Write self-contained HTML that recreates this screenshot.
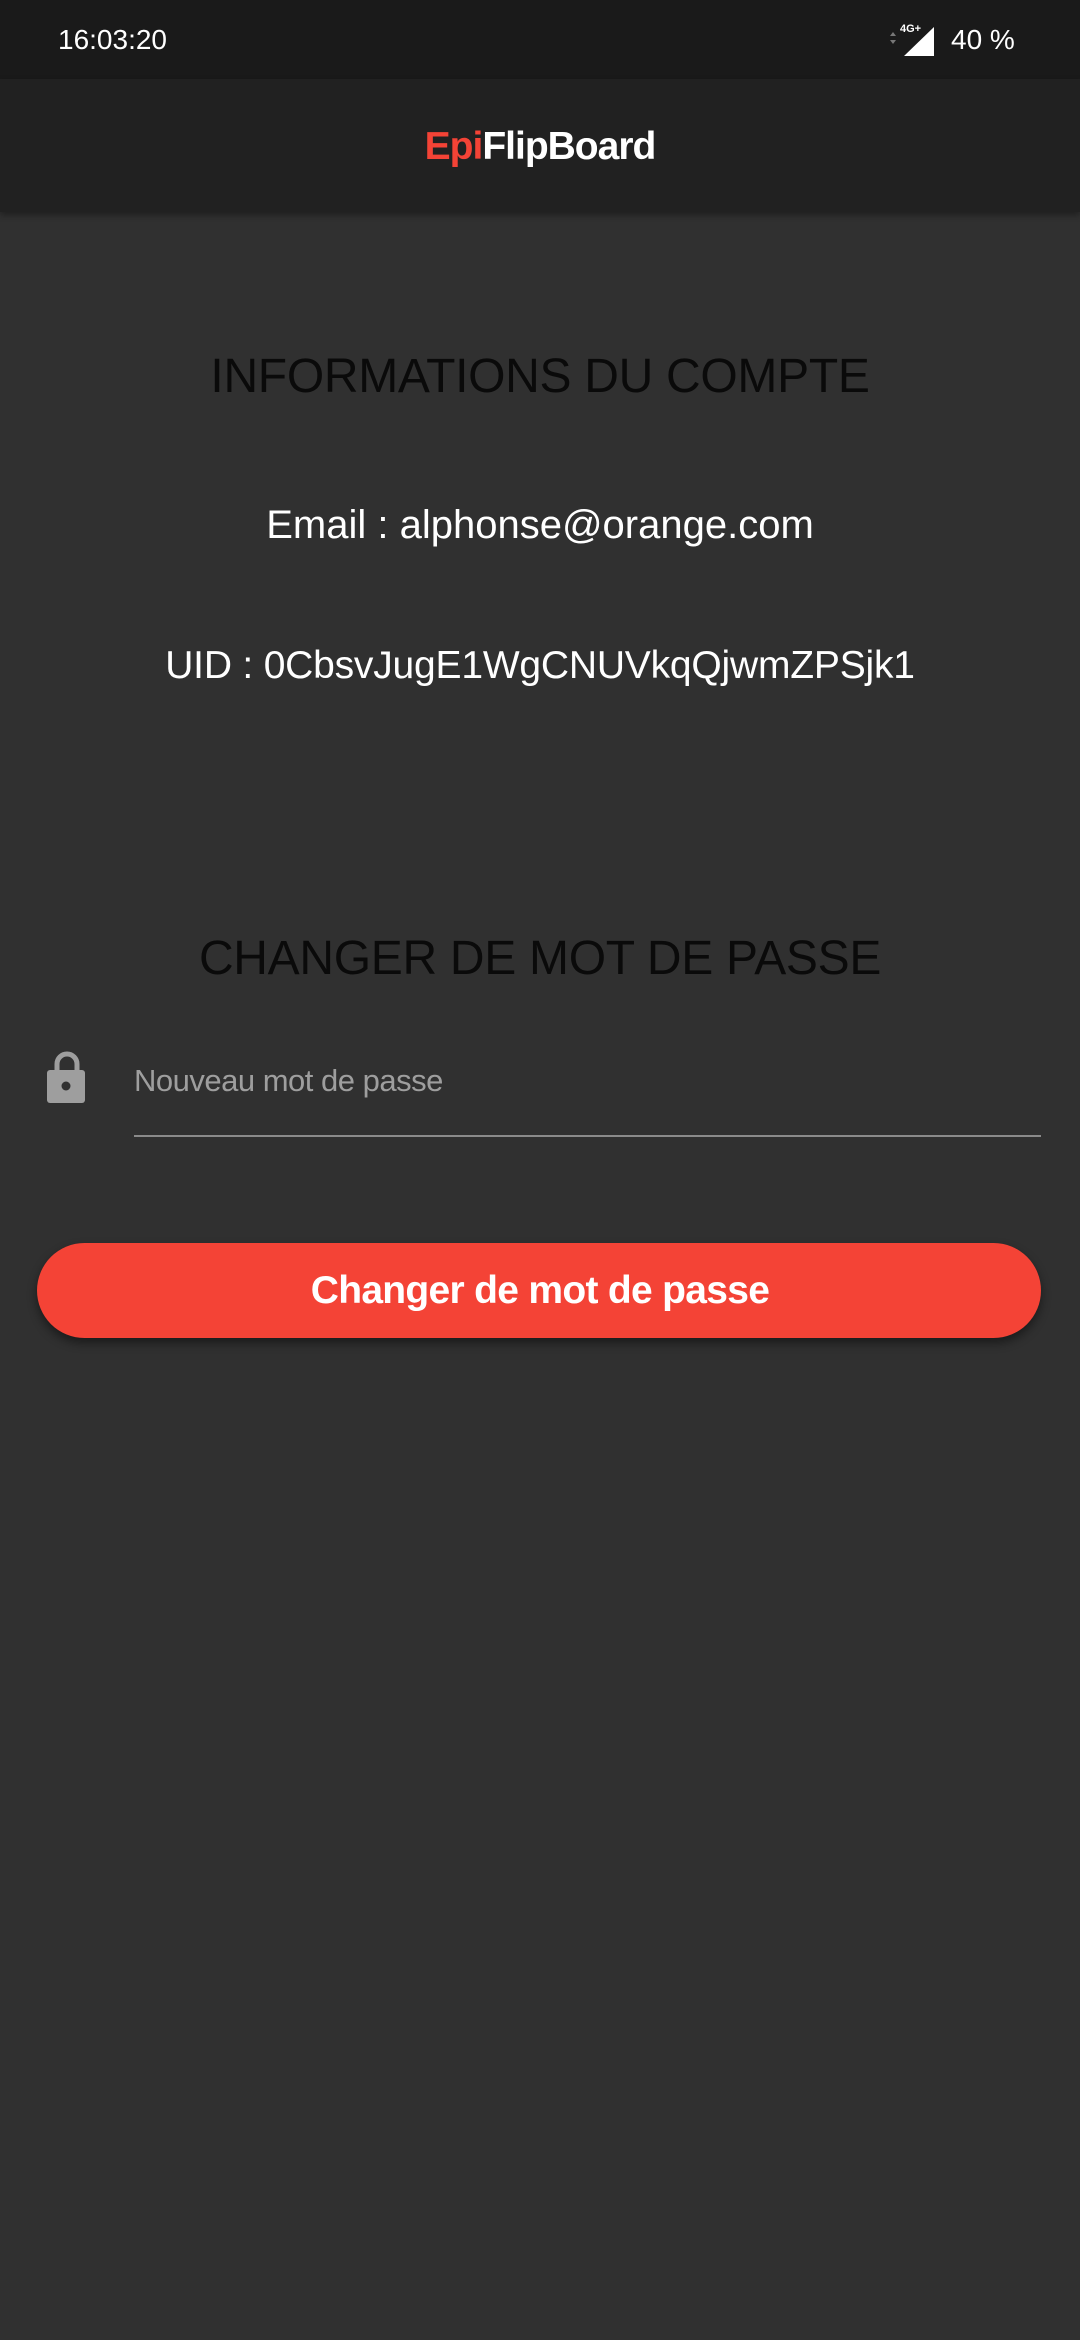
<!DOCTYPE html>
<html><head><meta charset="utf-8"><style>
html,body{margin:0;padding:0;}
body{width:1080px;height:2340px;background:#303030;font-family:"Liberation Sans",sans-serif;position:relative;overflow:hidden;}
.sb{position:absolute;left:0;top:0;width:1080px;height:79px;background:#1a1a1a;}
.ab{position:absolute;left:0;top:79px;width:1080px;height:133px;background:#212121;box-shadow:0 3px 6px rgba(0,0,0,0.35);}
.t{position:absolute;left:0;width:1080px;text-align:center;white-space:nowrap;}
</style></head><body>
<div class="sb">
<div style="position:absolute;left:58px;top:24px;color:#fff;font-size:28px;">16:03:20</div>
<svg style="position:absolute;left:884px;top:22px" width="52" height="36" viewBox="0 0 52 36">
<path d="M6 14 L9 10 L12 14Z M6 18 L9 22 L12 18Z" fill="#777"/>
<path d="M50 5 L50 34 L20 34Z" fill="#fff"/>
<text x="16" y="10" fill="#fff" font-size="11" font-weight="bold" font-family="Liberation Sans">4G+</text>
</svg>
<div style="position:absolute;left:951px;top:24px;color:#fff;font-size:28px;">40 %</div>
</div>
<div class="ab">
<div class="t" style="top:46px;font-size:39px;font-weight:bold;letter-spacing:-1px;"><span style="color:#f44336">Epi</span><span style="color:#fff">FlipBoard</span></div>
</div>
<div class="t" style="top:349px;font-size:48px;color:#0a0a0a;letter-spacing:-0.3px;">INFORMATIONS DU COMPTE</div>
<div class="t" style="top:503px;font-size:40px;color:#fff;">Email : alphonse@orange.com</div>
<div class="t" style="top:644px;font-size:39px;color:#fff;letter-spacing:-0.2px;">UID : 0CbsvJugE1WgCNUVkqQjwmZPSjk1</div>
<div class="t" style="top:931px;font-size:48px;color:#0a0a0a;letter-spacing:-0.3px;">CHANGER DE MOT DE PASSE</div>
<svg style="position:absolute;left:44px;top:1050px" width="46" height="58" viewBox="0 0 46 58">
<path d="M13 22 V14 A10 10 0 0 1 33 14 V22" fill="none" stroke="#9e9e9e" stroke-width="5"/>
<rect x="3" y="20" width="38" height="33" rx="3" fill="#9e9e9e"/>
<circle cx="22" cy="36" r="4.5" fill="#303030"/>
</svg>
<div style="position:absolute;left:134px;top:1063px;font-size:31px;color:#9e9e9e;letter-spacing:-0.5px;">Nouveau mot de passe</div>
<div style="position:absolute;left:134px;top:1135px;width:907px;height:2px;background:#8a8a8a;"></div>
<div style="position:absolute;left:37px;top:1243px;width:1004px;height:95px;border-radius:48px;background:#f44336;box-shadow:0 5px 10px rgba(0,0,0,0.45);"></div>
<div class="t" style="top:1269px;font-size:39px;font-weight:bold;color:#fff;letter-spacing:-0.7px;">Changer de mot de passe</div>
</body></html>
